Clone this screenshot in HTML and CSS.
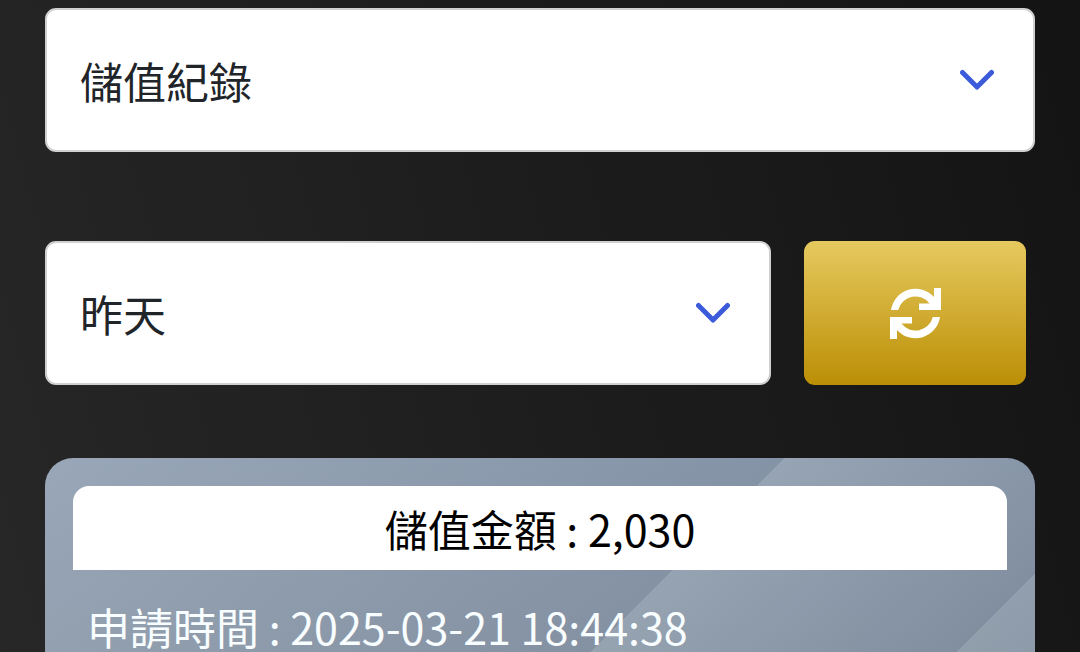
FILE: index.html
```
<!DOCTYPE html>
<html lang="zh-Hant">
<head>
<meta charset="utf-8">
<meta name="viewport" content="width=device-width, initial-scale=1">
<title>儲值紀錄</title>
<link rel="stylesheet" href="styles.css">
</head>
<body>
<main class="page">
  <div class="field">
    <select class="field-select" aria-label="紀錄類型">
      <option>儲值紀錄</option>
    </select>
    <svg class="field-chevron" viewBox="0 0 34 22" aria-hidden="true"><path d="M2.5 3.5 17 18 31.5 3.5"/></svg>
  </div>

  <div class="filter-row">
    <div class="field">
      <select class="field-select" aria-label="日期">
        <option>昨天</option>
      </select>
      <svg class="field-chevron" viewBox="0 0 34 22" aria-hidden="true"><path d="M2.5 3.5 17 18 31.5 3.5"/></svg>
    </div>
    <button class="refresh" type="button" aria-label="重新整理">
      <svg class="refresh-icon" viewBox="0 0 51 51" aria-hidden="true">
        <path id="half" d="M1 22A24.8 24.8 0 0 1 44 9V0h7v22H29v-6.500h10.500A17.700 17.700 0 0 0 8.200 22Z"/>
        <use href="#half" transform="rotate(180 25.5 25.5)"/>
      </svg>
    </button>
  </div>

  <article class="record">
    <h2 class="record-title">儲值金額 : 2,030</h2>
    <p class="record-line">申請時間 : 2025-03-21 18:44:38</p>
  </article>
</main>
</body>
</html>
```
FILE: styles.css
```
* {
  box-sizing: border-box;
}

body {
  margin: 0;
  background: linear-gradient(75deg, #272727 0%, #1e1e1e 45%, #141414 100%);
  font-family: "Noto Sans CJK TC", sans-serif;
  font-size: 43px;
}

.page {
  display: flex;
  flex-direction: column;
  min-height: 100vh;
  padding: 8px 45px 0;
}

.field {
  display: grid;
  align-items: center;
}

.field-select,
.field-chevron {
  grid-area: 1 / 1;
}

.field-select {
  width: 100%;
  height: 144px;
  padding: 0 96px 0 33px;
  border: 2px solid #ced0d2;
  border-radius: 11px;
  appearance: none;
  background: #fff;
  color: #212529;
  font: inherit;
}

.field-chevron {
  justify-self: end;
  width: 34px;
  height: 22px;
  margin-right: 41px;
  fill: none;
  stroke: #3b5bdb;
  stroke-width: 5;
  stroke-linecap: round;
  stroke-linejoin: round;
  pointer-events: none;
}

.filter-row {
  display: grid;
  grid-template-columns: 726fr 222fr;
  gap: 33px;
  margin: 89px 9px 73px 0;
}

.refresh {
  display: flex;
  align-items: center;
  justify-content: center;
  padding: 0;
  border: 0;
  border-radius: 11px;
  background: linear-gradient(#e6c95f, #bb8f05);
}

.refresh-icon {
  width: 51px;
  height: 51px;
  fill: #fff;
}

.record {
  flex: 1;
  padding: 28px 28px 0;
  border-radius: 28px 28px 0 0;
  background:
    linear-gradient(#8090b018, #80808018 200px),
    linear-gradient(135deg, #9ba9b9 0, #8593a6 523px, #98a6b5 523px, #8290a2 782px, #93a1b0 782px, #8290a2 1040px);
}

.record-title {
  margin: 0;
  padding: 12px 16px;
  border-radius: 16px 16px 0 0;
  background: #fff;
  color: #000;
  font-size: 43px;
  font-weight: 400;
  line-height: 60px;
  text-align: center;
}

.record-line {
  margin: 0;
  padding: 32px 14px 0;
  color: #f8fdff;
  line-height: 48px;
}
```
